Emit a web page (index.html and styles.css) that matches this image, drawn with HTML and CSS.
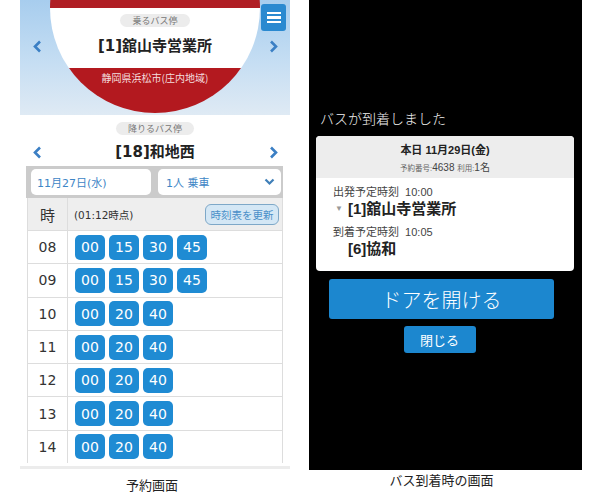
FILE: index.html
```html
<!DOCTYPE html>
<html lang="ja">
<head>
<meta charset="utf-8">
<title>バス予約</title>
<link rel="stylesheet" href="styles.css">
</head>
<body>
<div class="page">
  <section class="col col-left">
    <div class="phone">
      <header class="stop-head">
        <span class="nav nav-l"><svg width="9" height="13" viewBox="0 0 9 13"><polyline points="7,1.5 2,6.5 7,11.5" fill="none" stroke="#3b7fc4" stroke-width="2.6"/></svg></span>
        <div class="sign">
          <span class="pill">乗るバス停</span>
          <h1 class="stop-name">[1]舘山寺営業所</h1>
          <p class="region">静岡県浜松市(庄内地域)</p>
        </div>
        <span class="nav nav-r"><svg width="9" height="13" viewBox="0 0 9 13"><polyline points="2,1.5 7,6.5 2,11.5" fill="none" stroke="#3b7fc4" stroke-width="2.6"/></svg></span>
        <button class="menu" type="button" aria-label="menu"><span></span><span></span><span></span></button>
      </header>
      <div class="alight">
        <span class="pill">降りるバス停</span>
        <div class="alight-row">
          <span class="nav nav-l"><svg width="9" height="13" viewBox="0 0 9 13"><polyline points="7,1.5 2,6.5 7,11.5" fill="none" stroke="#3b7fc4" stroke-width="2.6"/></svg></span>
          <h2 class="stop-name">[18]和地西</h2>
          <span class="nav nav-r"><svg width="9" height="13" viewBox="0 0 9 13"><polyline points="2,1.5 7,6.5 2,11.5" fill="none" stroke="#3b7fc4" stroke-width="2.6"/></svg></span>
        </div>
      </div>
      <div class="form">
        <div class="field date">11月27日(水)</div>
        <div class="field select">1人 乗車<svg width="11" height="8" viewBox="0 0 11 8"><polyline points="1.5,1.5 5.5,5.5 9.5,1.5" fill="none" stroke="#3f7fb8" stroke-width="2.2"/></svg></div>
      </div>
      <div class="tt">
        <div class="tt-row tt-head">
          <div class="hour">時</div>
          <div class="mins head-mins"><span class="asof">(01:12時点)</span><button class="refresh" type="button">時刻表を更新</button></div>
        </div>
        <div class="tt-row"><div class="hour">08</div><div class="mins"><span class="b">00</span><span class="b">15</span><span class="b">30</span><span class="b">45</span></div></div>
        <div class="tt-row"><div class="hour">09</div><div class="mins"><span class="b">00</span><span class="b">15</span><span class="b">30</span><span class="b">45</span></div></div>
        <div class="tt-row"><div class="hour">10</div><div class="mins"><span class="b">00</span><span class="b">20</span><span class="b">40</span></div></div>
        <div class="tt-row"><div class="hour">11</div><div class="mins"><span class="b">00</span><span class="b">20</span><span class="b">40</span></div></div>
        <div class="tt-row"><div class="hour">12</div><div class="mins"><span class="b">00</span><span class="b">20</span><span class="b">40</span></div></div>
        <div class="tt-row"><div class="hour">13</div><div class="mins"><span class="b">00</span><span class="b">20</span><span class="b">40</span></div></div>
        <div class="tt-row"><div class="hour">14</div><div class="mins"><span class="b">00</span><span class="b">20</span><span class="b">40</span></div></div>
      </div>
      <div class="phone-foot"></div>
    </div>
    <p class="caption cap-left">予約画面</p>
  </section>

  <section class="col col-right">
    <div class="screen">
      <p class="arrived">バスが到着しました</p>
      <div class="card">
        <div class="card-head">
          <p class="today">本日 11月29日(金)</p>
          <p class="resv"><small>予約番号:</small>4638 <small>利用:</small>1名</p>
        </div>
        <div class="card-body">
          <p class="t-label">出発予定時刻&nbsp; 10:00</p>
          <p class="t-stop"><span class="tri">▼</span>[1]舘山寺営業所</p>
          <p class="t-label t-gap">到着予定時刻&nbsp; 10:05</p>
          <p class="t-stop"><span class="tri tri-blank"></span>[6]協和</p>
        </div>
      </div>
      <div class="actions">
        <button class="btn btn-door" type="button">ドアを開ける</button>
        <button class="btn btn-close" type="button">閉じる</button>
      </div>
    </div>
    <p class="caption cap-right">バス到着時の画面</p>
  </section>
</div>
</body>
</html>
```

FILE: styles.css
```css
* { box-sizing: border-box; }
html, body { margin: 0; padding: 0; background: #fff; }
body { width: 608px; height: 504px; overflow: hidden; font-family: "DejaVu Sans", "Noto Sans CJK JP", sans-serif; color: #333; }
p, h1, h2 { margin: 0; }
button { font-family: inherit; cursor: pointer; }

.page { display: flex; gap: 19px; padding-left: 20px; }

.col-left { width: 270px; display: flex; flex-direction: column; }
.phone { display: flex; flex-direction: column; }

/* boarding stop header */
.stop-head {
  position: relative;
  display: flex;
  height: 115px;
  overflow: hidden;
  background: linear-gradient(to bottom, #a7cdee 0%, #c6def3 55%, #dfeaf4 100%);
}
.nav { width: 30px; flex: none; display: flex; justify-content: center; }
.stop-head .nav { padding-top: 40px; align-items: flex-start; }
.nav-l { padding-left: 4px; }
.nav-r { padding-right: 4px; }
.nav svg { display: block; }

.sign {
  flex: none;
  width: 210px;
  height: 210px;
  margin-top: -97px;
  border-radius: 50%;
  background: linear-gradient(to bottom, #b01e24 0, #b01e24 105px, #fff 105px, #fff 165px, #b3191f 165px);
  display: flex;
  flex-direction: column;
  align-items: center;
  padding-top: 111px;
}
.pill {
  display: inline-block;
  background: #ececec;
  color: #777;
  font-family: "Noto Sans CJK JP", sans-serif;
  font-size: 9px;
  line-height: 13px;
  height: 13px;
  padding: 0 12px;
  border-radius: 7px;
}
.stop-name {
  font-family: "DejaVu Sans", "Noto Sans CJK JP", sans-serif;
  font-size: 15px;
  line-height: 20px;
  font-weight: bold;
  color: #222;
}
.sign .stop-name { margin-top: 9px; }
.region {
  margin-top: 15px;
  font-family: "Noto Sans CJK JP", sans-serif;
  font-size: 10px;
  line-height: 14px;
  color: #f4dede;
}
.menu {
  position: absolute;
  top: 4px;
  right: 4px;
  width: 25px;
  height: 27px;
  border: none;
  border-radius: 3px;
  background: #2a89d0;
  display: flex;
  flex-direction: column;
  justify-content: center;
  align-items: center;
  gap: 2px;
  padding: 0;
}
.menu span { display: block; width: 14px; height: 2.5px; background: #fff; }

/* alighting stop */
.alight { display: flex; flex-direction: column; align-items: center; padding-top: 7px; }
.alight-row { width: 100%; display: flex; align-items: center; height: 24px; margin-top: 5px; }
.alight-row .stop-name { flex: 1; text-align: center; }
.alight-row .nav { align-items: center; }

/* form */
.form {
  margin: 2px 7px 0 6px;
  background: #cbcbcb;
  padding: 3px 2px 3px 5px;
  display: flex;
  gap: 7px;
}
.field {
  height: 26px;
  background: #fff;
  border-radius: 5px;
  font-size: 11px;
  color: #3e86c6;
  display: flex;
  align-items: center;
  font-family: "DejaVu Sans", "Noto Sans CJK JP", sans-serif;
}
.date { width: 120px; padding-left: 6px; }
.select { flex: 1; padding: 0 6px 0 8px; justify-content: space-between; }

/* timetable */
.tt { margin: 0 7px; border-left: 1px solid #ddd; border-right: 1px solid #ddd; }
.tt-row { display: grid; grid-template-columns: 40px 1fr; height: 33.3px; border-top: 1px solid #ddd; }
.tt-row:first-child { border-top: none; }
.tt-head { height: 32px; background: #eee; }
.hour { border-right: 1px solid #ddd; display: flex; align-items: center; justify-content: center; font-size: 14px; color: #333; }
.tt-head .hour { font-family: "Noto Sans CJK JP", sans-serif; font-size: 15px; }
.mins { display: flex; align-items: center; gap: 4px; padding-left: 7px; }
.head-mins { justify-content: space-between; padding: 0 3px 0 6px; }
.asof { font-size: 10.5px; color: #333; }
.refresh {
  width: 74px;
  height: 21px;
  padding: 0;
  border: 1px solid #7ea8c8;
  border-radius: 6px;
  background: #d4e7f5;
  color: #4a8fc8;
  font-size: 10.5px;
  font-family: "Noto Sans CJK JP", sans-serif;
}
.b {
  width: 30px;
  height: 25px;
  border-radius: 5px;
  background: #1f8bd3;
  color: #fff;
  font-size: 14px;
  display: flex;
  align-items: center;
  justify-content: center;
}
.phone-foot { height: 3px; margin-top: 3px; background: #ececec; }

.caption {
  font-family: "Noto Sans CJK JP", serif;
  font-size: 13px;
  color: #222;
  text-align: center;
}
.cap-left { margin-top: 8px; line-height: 16px; padding-right: 6px; }

/* right side */
.col-right { width: 273px; display: flex; flex-direction: column; }
.screen {
  height: 470px;
  background: #000;
  display: flex;
  flex-direction: column;
  padding-top: 109px;
  font-family: "Liberation Sans", "Noto Sans CJK JP", sans-serif;
}
.arrived { color: #f2f2f2; font-size: 14px; line-height: 18px; padding-left: 11px; font-weight: 300; font-family: "Noto Sans CJK JP", sans-serif; }
.card {
  margin: 9px 8px 0 7px;
  background: #fff;
  border-radius: 4px;
  overflow: hidden;
}
.card-head {
  height: 42px;
  background: #ededed;
  display: flex;
  flex-direction: column;
  align-items: center;
  padding-top: 7px;
  gap: 3px;
}
.today { font-size: 11px; line-height: 15px; font-weight: bold; color: #222; }
.resv { font-size: 10px; line-height: 14px; color: #444; }
.resv small { font-size: 7.5px; color: #666; }
.card-body { padding: 7px 0 13px 17px; }
.t-label { font-size: 11px; line-height: 14px; color: #444; }
.t-gap { margin-top: 7px; }
.t-stop { font-size: 15px; line-height: 18px; font-weight: bold; color: #222; margin-top: 1px; display: flex; align-items: center; }
.tri { width: 15px; font-size: 8px; color: #999; padding-left: 2px; }
.actions { display: flex; flex-direction: column; align-items: center; margin: 8px 0 0 20px; width: 225px; gap: 7px; }
.btn {
  border: none;
  background: #1c87cf;
  color: #fff;
  font-family: "Noto Sans CJK JP", sans-serif;
  padding: 0;
}
.btn-door { width: 225px; height: 40px; font-size: 20px; border-radius: 3px; font-weight: 300; }
.btn-close { width: 72px; height: 27px; font-size: 13px; border-radius: 3px; margin-right: 4px; }
.cap-right { margin-top: 2px; line-height: 16px; padding-right: 8px; }
```
